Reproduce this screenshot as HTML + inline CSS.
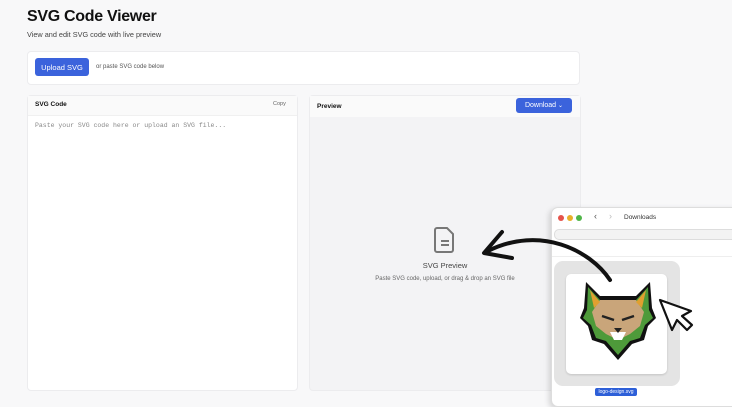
<!DOCTYPE html>
<html><head><meta charset="utf-8"><style>
*{margin:0;padding:0;box-sizing:border-box}
body{width:732px;height:402px;overflow:hidden;background:#f8f8f9;font-family:"Liberation Sans",sans-serif;position:relative;color:#111}
.abs{position:absolute}
h1{position:absolute;left:27px;top:8px;font-size:16px;font-weight:bold;letter-spacing:-0.3px}
.sub{left:27px;top:30px;font-size:7.3px;color:#444}
.card{background:#fff;border:1px solid #ececee;border-radius:4px}
.btn{background:#3b63dc;color:#fff;border-radius:3px;font-size:7.5px;display:flex;align-items:center;justify-content:center}
</style></head><body>
<h1>SVG Code Viewer</h1>
<div class="abs sub">View and edit SVG code with live preview</div>
<div class="abs card" style="left:27px;top:51px;width:553px;height:34px"></div>
<div class="abs btn" style="left:35px;top:58px;width:54px;height:18px">Upload SVG</div>
<div class="abs" style="left:96px;top:64px;font-size:6px;color:#555">or paste SVG code below</div>

<div class="abs card" style="left:27px;top:95px;width:271px;height:296px"></div>
<div class="abs" style="left:28px;top:96px;width:269px;height:20px;background:#fafafa;border-bottom:1px solid #f0f0f0"></div>
<div class="abs" style="left:35px;top:101px;font-size:6.5px;font-weight:bold">SVG Code</div>
<div class="abs" style="left:273px;top:101px;font-size:5.5px;color:#666">Copy</div>
<div class="abs" style="left:35px;top:122px;font-size:6.5px;color:#888;font-family:'Liberation Mono',monospace">Paste your SVG code here or upload an SVG file...</div>

<div class="abs card" style="left:309px;top:95px;width:272px;height:296px;background:#f3f3f5"></div>
<div class="abs" style="left:310px;top:96px;width:270px;height:21px;background:#fafafa"></div>
<div class="abs" style="left:317px;top:103px;font-size:6.5px;font-weight:bold">Preview</div>
<div class="abs btn" style="left:516px;top:98px;width:56px;height:15px;font-size:7px">Download&nbsp;<span style="font-size:6px">⌄</span></div>
<svg class="abs" style="left:433px;top:226px" width="24" height="28" viewBox="0 0 24 28"><path d="M4 2h10l6 6v16a2 2 0 0 1-2 2H4a2 2 0 0 1-2-2V4a2 2 0 0 1 2-2z" fill="none" stroke="#777" stroke-width="2"/><path d="M8 15h8M8 19h8" stroke="#777" stroke-width="2"/></svg>
<div class="abs" style="left:395px;top:261px;width:100px;text-align:center;font-size:7.5px;color:#444">SVG Preview</div>
<div class="abs" style="left:345px;top:276px;width:200px;text-align:center;font-size:6px;color:#666">Paste SVG code, upload, or drag &amp; drop an SVG file</div>

<div class="abs" style="left:551px;top:207px;width:190px;height:200px;background:#fff;border:1px solid #ddd;border-radius:7px;box-shadow:-2px 2px 6px rgba(0,0,0,.15)"></div>
<div class="abs" style="left:558px;top:215px;width:6px;height:6px;border-radius:50%;background:#e5534b"></div>
<div class="abs" style="left:567px;top:215px;width:6px;height:6px;border-radius:50%;background:#e8b02a"></div>
<div class="abs" style="left:576px;top:215px;width:6px;height:6px;border-radius:50%;background:#4fb548"></div>
<div class="abs" style="left:594px;top:211px;font-size:9px;color:#555">‹</div>
<div class="abs" style="left:609px;top:211px;font-size:9px;color:#bbb">›</div>
<div class="abs" style="left:624px;top:214px;font-size:6.5px;color:#333">Downloads</div>
<div class="abs" style="left:554px;top:229px;width:190px;height:11px;border:1px solid #ddd;border-radius:5px;background:#f3f3f3"></div>
<div class="abs" style="left:552px;top:256px;width:190px;height:1px;background:#eee"></div>
<div class="abs" style="left:554px;top:261px;width:126px;height:125px;background:#e4e4e4;border-radius:9px"></div>
<div class="abs" style="left:566px;top:274px;width:101px;height:100px;background:#fff;border-radius:5px;box-shadow:0 1px 2px rgba(0,0,0,.15)"></div>
<svg class="abs" style="left:578px;top:278px" width="80" height="84" viewBox="0 0 80 84">
<path d="M8 4L22 18L58 18L72 4L74 30L78 40L70 48L66 62L54 66L40 82L26 66L14 62L10 48L2 40L6 30Z" fill="#111"/>
<path d="M10 9L22 22L58 22L70 9L71 32L75 40L67 47L62 60L52 63L40 77L28 63L18 60L13 47L5 40L9 32Z" fill="#4e9a3a"/>
<path d="M22 22L58 22L66 34L62 48L52 56L40 62L28 56L18 48L14 34Z" fill="#c9a57a"/>
<path d="M12 12L22 24L16 30ZM68 12L58 24L64 30Z" fill="#e0a030"/>
<path d="M24 38L36 42M56 38L44 42" stroke="#222" stroke-width="2.5"/>
<path d="M32 54L48 54L44 62L36 62Z" fill="#fff"/>
<path d="M36 50L44 50L40 55Z" fill="#222"/>
</svg>
<div class="abs" style="left:595px;top:388px;width:42px;height:8px;background:#2d5fd8;border-radius:2px;color:#fff;font-size:5px;text-align:center;line-height:8px">logo-design.svg</div>

<svg class="abs" style="left:0;top:0" width="732" height="402">
<path d="M610 280C590 250 540 225 488 251" fill="none" stroke="#111" stroke-width="4" stroke-linecap="round"/>
<path d="M502 232L484 253L512 258" fill="none" stroke="#111" stroke-width="4" stroke-linecap="round" stroke-linejoin="round"/>
<path d="M660 300L672 330L677 320L687 330L692 325L682 316L691 311Z" fill="#fff" stroke="#111" stroke-width="2.2" stroke-linejoin="round"/>
</svg>
</body></html>
